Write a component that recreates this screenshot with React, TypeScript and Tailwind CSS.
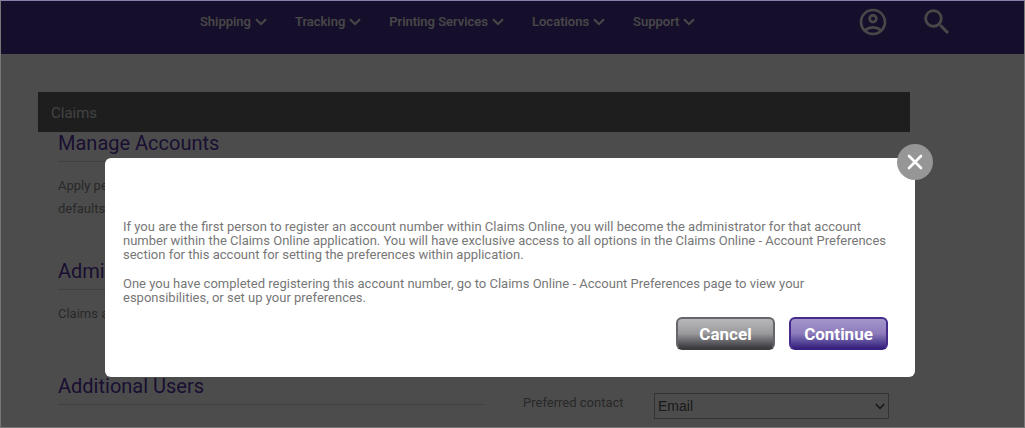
import { ReactNode } from "react";
import { MdOutlineAccountCircle, MdSearch } from "react-icons/md";

const menuItems = ["Shipping", "Tracking", "Printing Services", "Locations", "Support"];

const Chevron = ({ className }: { className: string }) => (
    <svg viewBox="0 0 12 8" fill="none" stroke="currentColor" strokeWidth="2" className={className}>
        <path d="M1 1.2 L6 6.2 L11 1.2" />
    </svg>
);

const HeaderBar = () => (
    <header className="flex h-[53px] items-start bg-[#4b328f] text-[#f2f2f2]">
        <nav className="flex flex-1 gap-7 pt-[11px] pl-[199px]">
            {menuItems.map((item) => (
                <button key={item} className="flex items-center gap-1 whitespace-nowrap text-[13px] leading-5 font-medium">
                    {item}
                    <Chevron className="h-2 w-3" />
                </button>
            ))}
        </nav>
        <div className="flex items-center gap-[31px] pt-1 pr-[70px]">
            <button aria-label="Account"><MdOutlineAccountCircle size={32} /></button>
            <button aria-label="Search"><MdSearch size={34} /></button>
        </div>
    </header>
);

const Section = ({ title, className, children }: { title: string; className: string; children?: ReactNode }) => (
    <section className={className}>
        <h2 className="border-b border-[#d8d8d8] pb-2 text-[20px] leading-5 text-[#5533a5]">{title}</h2>
        <div className="pt-3 text-[13px] leading-[23px] text-[#888888]">{children}</div>
    </section>
);

const Claims = () => (
    <main className="mr-[114px] ml-[37px] pt-[38px]">
        <h1 className="h-10 bg-[#646464] px-[13px] text-[15px] leading-[43px] text-[#dddddd]">Claims</h1>
        <div className="grid grid-cols-[426px_1fr] gap-x-[39px] pr-[21px] pl-5">
            <div className="pt-px">
                <Section title="Manage Accounts" className="h-32">
                    <p>Apply personal</p>
                    <p>defaults for</p>
                </Section>
                <Section title="Admin" className="h-[115px]">
                    <p>Claims access</p>
                </Section>
                <Section title="Additional Users" className="h-[43px]" />
            </div>
            <div className="flex items-end justify-between">
                <label htmlFor="contact" className="text-[13px] leading-8 text-[#888888]">Preferred contact</label>
                <div className="relative w-[235px]">
                    <select id="contact" className="block h-[26px] w-full appearance-none border border-[#b0b0b0] px-[3px] font-['Liberation_Sans',Arial,sans-serif] text-[14px] text-[#555555]">
                        <option>Email</option>
                    </select>
                    <Chevron className="pointer-events-none absolute top-[10px] right-1 h-[7px] w-[10px] text-[#555555]" />
                </div>
            </div>
        </div>
    </main>
);

const RegisterDialog = () => (
    <div className="absolute inset-0 bg-black/70 pt-[157px] pr-[109px] pl-[104px]">
        <div role="dialog" aria-modal="true" className="relative rounded-md bg-white px-[18px] pt-[62px] pb-[27px]">
            <button aria-label="Close" className="absolute -top-[14px] -right-[18px] flex size-9 items-center justify-center rounded-full bg-[#969696] text-white">
                <svg viewBox="0 0 16 16" fill="none" stroke="currentColor" strokeWidth="2.6" strokeLinecap="round" className="size-4">
                    <path d="M2 2 L14 14 M14 2 L2 14" />
                </svg>
            </button>
            <div className="text-[13px] leading-[14px] text-[#777777]">
                <p>
                    If you are the first person to register an account number within Claims Online, you will become the administrator for that account<br />
                    number within the Claims Online application. You will have exclusive access to all options in the Claims Online - Account Preferences<br />
                    section for this account for setting the preferences within application.
                </p>
                <p className="pt-[15px]">
                    One you have completed registering this account number, go to Claims Online - Account Preferences page to view your<br />
                    esponsibilities, or set up your preferences.
                </p>
            </div>
            <div className="flex justify-end gap-[14px] pt-3 pr-[9px] text-[17px] leading-5 font-bold text-white">
                <button className="h-[33px] w-[99px] rounded-md border-2 border-b-[#3b3a3f] border-[#66666a] bg-linear-to-b from-[#b8b8ba] via-[#9a9a9d] to-[#3b3a3f]">Cancel</button>
                <button className="h-[33px] w-[99px] rounded-md border-2 border-[#442b8c] border-b-[#38207f] bg-linear-to-b from-[#a596cb] via-[#8d7bbb] to-[#38207f]">Continue</button>
            </div>
        </div>
    </div>
);

const App = () => {
    return (
        <div className="relative min-h-screen border border-[#777777] border-t-[#8680ae] bg-white font-['Roboto',sans-serif]">
            <HeaderBar />
            <Claims />
            <RegisterDialog />
        </div>
    );
}

export default App;
